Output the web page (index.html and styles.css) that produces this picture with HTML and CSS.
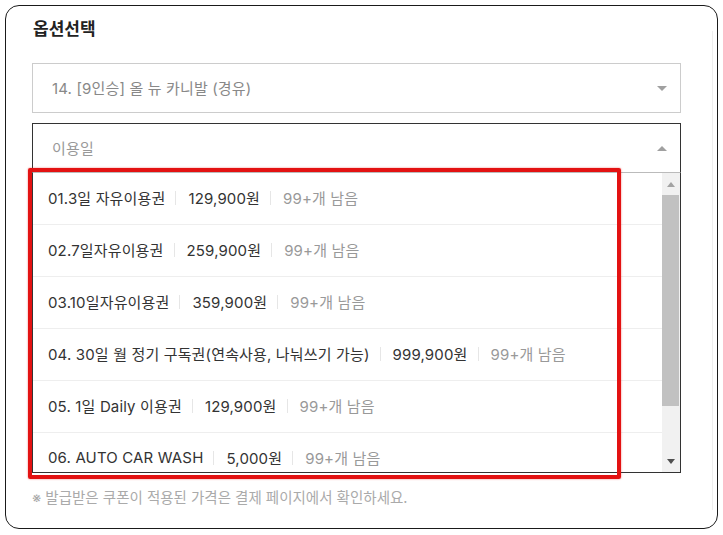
FILE: index.html
```html
<!DOCTYPE html>
<html lang="ko">
<head>
  <meta charset="UTF-8" />
  <meta name="viewport" content="width=device-width, initial-scale=1.0" />
  <title>옵션선택</title>
  <link rel="stylesheet" href="styles.css">
</head>
<body>
  <div class="frame">
    <h2 class="title">옵션선택</h2>

    <div class="select">
      <span class="select-text">14. [9인승] 올 뉴 카니발 (경유)</span>
      <span class="caret caret-down"></span>
    </div>

    <div class="select select-open">
      <span class="select-text">이용일</span>
      <span class="caret caret-up"></span>
    </div>

    <div class="option-list">
      <ul class="rows">
        <li class="row">01.3일 자유이용권<span class="sep"></span>129,900원<span class="sep"></span><span class="stock">99+개 남음</span></li>
        <li class="row">02.7일자유이용권<span class="sep"></span>259,900원<span class="sep"></span><span class="stock">99+개 남음</span></li>
        <li class="row">03.10일자유이용권<span class="sep"></span>359,900원<span class="sep"></span><span class="stock">99+개 남음</span></li>
        <li class="row">04. 30일 월 정기 구독권(연속사용, 나눠쓰기 가능)<span class="sep"></span>999,900원<span class="sep"></span><span class="stock">99+개 남음</span></li>
        <li class="row">05. 1일 Daily 이용권<span class="sep"></span>129,900원<span class="sep"></span><span class="stock">99+개 남음</span></li>
        <li class="row">06. AUTO CAR WASH<span class="sep"></span>5,000원<span class="sep"></span><span class="stock">99+개 남음</span></li>
      </ul>
      <div class="scrollbar">
        <div class="sb-btn"><span class="sb-arrow sb-up"></span></div>
        <div class="sb-thumb"></div>
        <div class="sb-track"></div>
        <div class="sb-btn"><span class="sb-arrow sb-down"></span></div>
      </div>
    </div>

    <p class="note">※ 발급받은 쿠폰이 적용된 가격은 결제 페이지에서 확인하세요.</p>

    <div class="highlight"></div>
  </div>
</body>
</html>
```

FILE: styles.css
```css
body {
  margin: 0;
  background: #fff;
  font-family: Inter, "Noto Sans CJK KR", sans-serif;
  letter-spacing: 0.15px;
  color: #333;
}

.frame {
  position: relative;
  margin: 5px 0 0 5px;
  width: 713px;
  height: 524px;
  box-sizing: border-box;
  border: 1px solid #1a1a1a;
  border-radius: 14px;
  padding: 11px 36px 0 26px;
}

/* faint line near the right edge */
.frame::after {
  content: "";
  position: absolute;
  right: 4px;
  top: 25px;
  bottom: 18px;
  width: 1px;
  background: #eeeeee;
}

.title {
  margin: 0 0 0 1px;
  font-size: 17px;
  line-height: 24px;
  font-weight: bold;
  letter-spacing: 0;
  color: #222;
}

.select {
  display: flex;
  align-items: center;
  justify-content: space-between;
  height: 50px;
  margin-top: 22px;
  padding: 0 13px 0 19px;
  box-sizing: border-box;
  border: 1px solid #cccccc;
  font-size: 15px;
  color: #888;
}

.select-open {
  margin-top: 10px;
  border-color: #333;
  border-bottom-color: #bbbbbb;
  color: #999;
}

.select-text {
  margin-top: -2px;
}

.caret {
  width: 0;
  height: 0;
  border-left: 5px solid transparent;
  border-right: 5px solid transparent;
}

.caret-down {
  border-top: 5px solid #a0a0a0;
}

.caret-up {
  border-bottom: 5px solid #a0a0a0;
}

.option-list {
  display: flex;
  height: 300px;
  box-sizing: border-box;
  border: 1px solid #333;
  border-top: none;
}

.rows {
  flex: 1;
  margin: 0;
  padding: 0;
  list-style: none;
  overflow: hidden;
}

.row {
  display: flex;
  align-items: center;
  height: 52px;
  box-sizing: border-box;
  padding: 0 0 2px 15px;
  border-bottom: 1px solid #eeeeee;
  font-size: 15px;
  color: #333;
  white-space: nowrap;
}

.sep {
  display: inline-block;
  width: 1px;
  height: 14px;
  margin: 0 12px 0 10px;
  background: #e6e6e6;
}

.stock {
  color: #999;
}

.scrollbar {
  display: flex;
  flex-direction: column;
  width: 18px;
  background: #f1f1f1;
}

.sb-btn {
  display: flex;
  align-items: center;
  justify-content: center;
  height: 22px;
}

.sb-arrow {
  width: 0;
  height: 0;
  border-left: 4px solid transparent;
  border-right: 4px solid transparent;
}

.sb-up {
  border-bottom: 5px solid #a3a3a3;
}

.sb-down {
  border-top: 5px solid #505050;
}

.sb-thumb {
  height: 211px;
  margin: 0 1px 0 0;
  background: #c1c1c1;
}

.sb-track {
  flex: 1;
}

.note {
  margin: 15px 0 0;
  font-size: 14.5px;
  line-height: 20px;
  letter-spacing: 0;
  color: #aaa;
}

.highlight {
  position: absolute;
  left: 22px;
  top: 162px;
  width: 593px;
  height: 311px;
  box-sizing: border-box;
  border: 4px solid #e31212;
  border-radius: 2px;
  box-shadow: 0 0 2px rgba(230, 20, 20, 0.6);
}
```
